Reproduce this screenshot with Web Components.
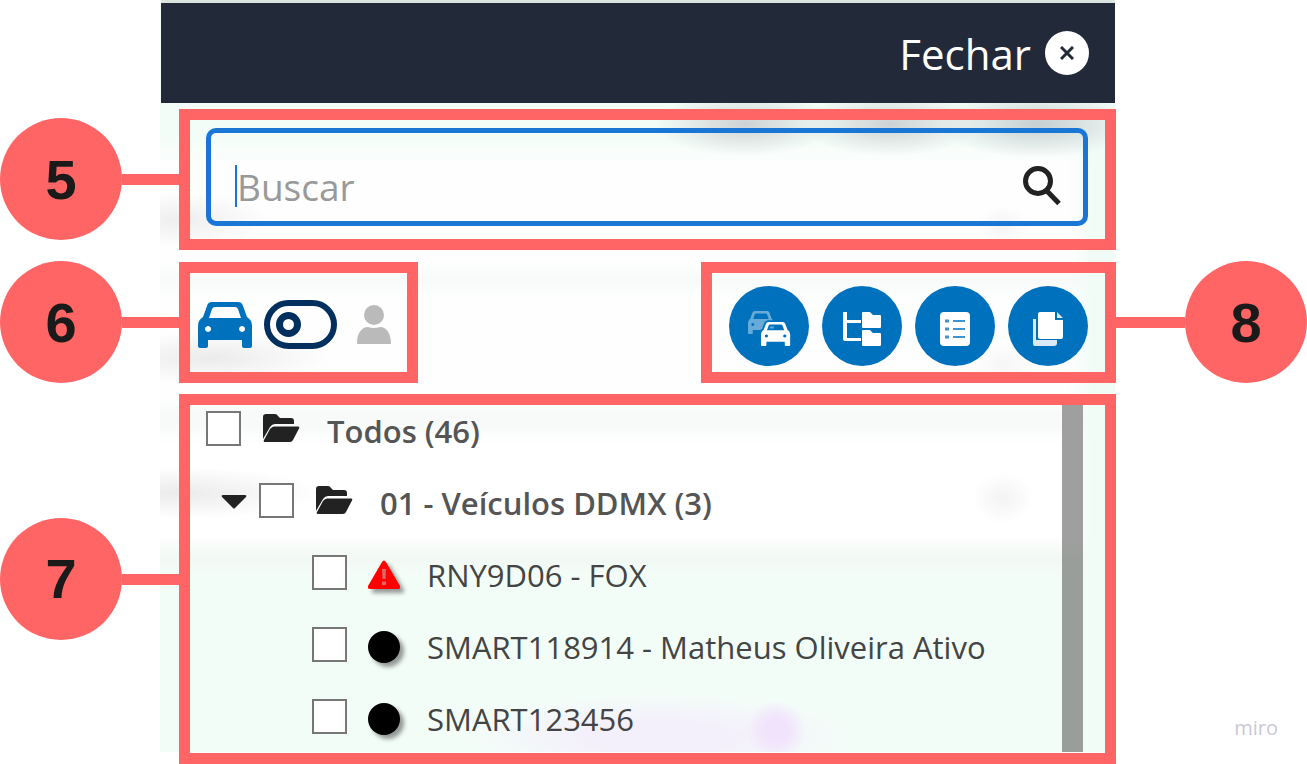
<!DOCTYPE html>
<html lang="pt-BR">
<head>
<meta charset="utf-8">
<meta name="viewport" content="width=device-width, initial-scale=1">
<title>Painel de veículos</title>
<style>
  body {
    margin: 0;
    background: #fff;
    font-family: "Open Sans", "Noto Sans", sans-serif;
  }
</style>
</head>
<body>
<guide-board>
  <panel-header>Fechar</panel-header>
  <callout-frame class="wide" number="5">
    <search-field placeholder="Buscar"></search-field>
  </callout-frame>
  <board-row>
    <callout-frame number="6">
      <mode-switch></mode-switch>
    </callout-frame>
    <callout-frame number="8" side="right">
      <action-bar>
        <round-action icon="cars" label="Veículos"></round-action>
        <round-action icon="tree" label="Grupos"></round-action>
        <round-action icon="list" label="Lista"></round-action>
        <round-action icon="copy" label="Copiar"></round-action>
      </action-bar>
    </callout-frame>
  </board-row>
  <callout-frame class="wide" number="7">
    <vehicle-tree>
      <tree-item level="0" icon="folder">Todos (46)</tree-item>
      <tree-item level="1" icon="folder" open>01 - Veículos DDMX (3)</tree-item>
      <tree-item level="2" icon="alert">RNY9D06 - FOX</tree-item>
      <tree-item level="2" icon="dot">SMART118914 - Matheus Oliveira Ativo</tree-item>
      <tree-item level="2" icon="dot">SMART123456</tree-item>
    </vehicle-tree>
  </callout-frame>
</guide-board>

<script>
const CAR = 'M14 0H40q4 0 5 4l4 11q5 3 5 9V44q0 2-2 2H46q-2 0-2-2V38H10v6q0 2-2 2H2q-2 0-2-2V24q0-6 5-9L9 4q1-4 5-4zM17 5q-2 0-3 2L11 16H43L40 7q-1-2-3-2zM10 24a3 3 0 1 0 .1 0zM44 24a3 3 0 1 0 .1 0z';

const ICONS = {
  car: `<svg width="54" height="46" viewBox="0 0 54 46" fill="#0071bd" fill-rule="evenodd"><path d="${CAR}"/></svg>`,
  person: `<svg width="34" height="40" viewBox="0 0 34 40" fill="#bababa"><circle cx="17" cy="10" r="10"/><path d="M0 38C0 28 5 22 11 22q6 2 12 0c6 0 11 6 11 16q0 1-1 1H1q-1 0-1-1z"/></svg>`,
  search: `<svg width="38" height="40" viewBox="0 0 38 40" fill="none" stroke="#222" stroke-width="5"><circle cx="15" cy="15" r="12.500"/><path d="M24 25L36 37.500"/></svg>`,
  close: `<svg width="14" height="14" viewBox="0 0 14 14" stroke="#222938" stroke-width="3"><path d="M1 1l12 12M13 1L1 13"/></svg>`,
  caret: `<svg width="26" height="14" viewBox="0 0 26 14" fill="#222"><path d="M2 0H24q2 0 1 2L14 13q-1 1-2 0L1 2Q0 0 2 0z"/></svg>`,
  folder: `<svg width="38" height="30" viewBox="0 0 38 30" fill="#222"><path d="M1 4q0-3 3-3h9q2 0 3 2l2 2h11q3 0 3 3v3H13q-3 0-5 3L1 26z"/><path d="M12 13.500h24q2 0 1 2L31 27q-1 2-3 2H3q-2 0-1-2L8 16q2-2.500 4-2.500z"/></svg>`,
  alert: `<svg width="32" height="32" viewBox="0 0 32 32"><path d="M14 3q2-3 4 0l14 24q1 3-2 3H2q-3 0-2-3z" fill="#f00"/><path d="M14 10h4l-.5 10h-3zM14 22.500h4v3.500h-4z" fill="#d8686a"/></svg>`,
  dot: `<svg width="32" height="32" viewBox="0 0 32 32"><circle cx="16" cy="16" r="16"/></svg>`,
  cars: `<svg width="44" height="36" viewBox="0 0 44 36" fill-rule="evenodd"><path transform="translate(1) scale(.48 .5)" d="${CAR}" fill="#69abd8"/><path transform="translate(14 11) scale(.54 .52)" d="${CAR}" fill="none" stroke="#0071bd" stroke-width="7"/><path transform="translate(14 11) scale(.54 .52)" d="${CAR}" fill="#fff"/></svg>`,
  tree: `<svg width="40" height="36" viewBox="0 0 40 36" fill="#fff"><path d="M1 1h4v8h14v3H5v15h14v3H3q-2 0-2-2zM20 2q0-1 1-1h7l3 3h7q1 0 1 1v11q0 1-1 1H21q-1 0-1-1zM20 20q0-1 1-1h7l3 3h7q1 0 1 1v11q0 1-1 1H21q-1 0-1-1z"/></svg>`,
  list: `<svg width="32" height="36" viewBox="0 0 32 36"><rect x="1" y="1" width="30" height="34" rx="4" fill="#fff"/><g stroke="#3f94cf" stroke-width="2"><path d="M14 10h12M14 18h12M14 26h12"/><path d="M6 10h4M6 18h4M6 26h4" stroke-width="3"/></g></svg>`,
  copy: `<svg width="34" height="36" viewBox="0 0 34 36"><path d="M2 8h3v21h21v3q0 3-3 3H4q-2 0-2-2z" fill="#dbe9f6"/><path d="M9 1h15v8h8v17q0 2-2 2H9q-2 0-2-2V3q0-2 2-2z" fill="#fff"/><path d="M26 1l6 6h-6z" fill="#dbe9f6"/></svg>`
};

function render(element, markup) {
  const template = document.createElement('template');
  template.innerHTML = markup;
  element.attachShadow({mode: 'open'}).appendChild(template.content.cloneNode(true));
}

/**
 * GuideBoard: the panel backdrop with the annotated sections over it
 */
customElements.define('guide-board', class GuideBoard extends HTMLElement {
constructor() {
  super();
  render(this, `
<style>
  :host {
    display: grid;
  }
  .backdrop, .sections, a {
    grid-area: 1 / 1;
  }
  .backdrop {
    margin: 0 192px 12px 160px;
    background:
      radial-gradient(30px 30px at 616px 730px, #f1e3fc 40%, transparent),
      radial-gradient(190px 44px at 500px 738px, #f4f0fb 40%, transparent),
      radial-gradient(90px 32px at 585px 124px, #cdd3d4, transparent),
      radial-gradient(90px 32px at 730px 124px, #cdd3d4, transparent),
      radial-gradient(100px 34px at 878px 124px, #c6cfd1, transparent),
      radial-gradient(90px 28px at 20px 220px, #eee, transparent),
      radial-gradient(120px 26px at 50px 358px, #ebebeb, transparent),
      radial-gradient(140px 26px at 20px 493px, #ebebeb, transparent),
      radial-gradient(26px 20px at 843px 226px, #f4f4f4, transparent),
      radial-gradient(30px 22px at 843px 365px, #f6f6f6, transparent),
      radial-gradient(30px 26px at 843px 498px, #f3f3f3, transparent),
      linear-gradient(to left, #f2fcf7 24px, transparent 48px),
      linear-gradient(#f2fdf7 136px, #fefefe 164px, #fefefe 260px, #f8fafa 280px,
        #fefefe 300px, #fefefe 400px, #f8fafa 412px, #f8fafa 426px, #fff 444px,
        #fff 535px, #f2f8f4 558px, #f3fdf8 576px);
  }
  .sections {
    display: flex;
    flex-direction: column;
  }
  ::slotted(panel-header) {
    margin: 0 192px 6px 161px;
  }
  ::slotted(board-row) {
    margin: 12px 0 11px;
  }
  ::slotted(.wide) {
    margin-right: 191px;
  }
  a {
    place-self: end;
    margin: 0 29px 24px 0;
    color: #cac8d6;
    font-size: 20px;
    line-height: 24px;
    text-decoration: none;
  }
</style>
<div class="backdrop"></div>
<div class="sections"><slot></slot></div>
<a href="#miro">miro</a>
`);
}
});

/**
 * BoardRow
 */
customElements.define('board-row', class BoardRow extends HTMLElement {
constructor() {
  super();
  render(this, `
<style>
  :host {
    display: flex;
    justify-content: space-between;
  }
</style>
<slot></slot>
`);
}
});

/**
 * CalloutFrame: numbered marker, connector line and outlined area
 */
customElements.define('callout-frame', class CalloutFrame extends HTMLElement {
constructor() {
  super();
  render(this, `
<style>
  :host {
    --callout-color: #ff6565;
    display: flex;
    align-items: center;
  }
  .marker {
    flex: none;
    display: grid;
    place-items: center;
    width: 122px;
    height: 122px;
    margin: -1px 0 0;
    border-radius: 50%;
    background: var(--callout-color);
    color: #1a1a1a;
    font: bold 56px "Liberation Sans", sans-serif;
  }
  .line {
    flex: none;
    width: 57px;
    height: 11px;
    background: var(--callout-color);
  }
  .frame {
    flex: 1;
    border: 11px solid var(--callout-color);
  }
  :host([side="right"]) {
    flex-direction: row-reverse;
  }
  :host([side="right"]) .line {
    width: 69px;
  }
</style>
<div class="marker">${this.getAttribute('number')}</div>
<div class="line"></div>
<div class="frame"><slot></slot></div>
`);
}
});

/**
 * PanelHeader
 */
customElements.define('panel-header', class PanelHeader extends HTMLElement {
constructor() {
  super();
  render(this, `
<style>
  :host {
    display: flex;
    justify-content: flex-end;
    border-top: 3px solid #dce4df;
    background: #222938;
  }
  button {
    display: flex;
    align-items: center;
    gap: 14px;
    height: 100px;
    padding: 0 26px;
    border: 0;
    background: none;
    color: #fff;
    font: 42px "Open Sans", sans-serif;
  }
  .badge {
    display: grid;
    place-items: center;
    width: 44px;
    height: 44px;
    border-radius: 50%;
    background: #fff;
  }
</style>
<button type="button"><slot></slot><span class="badge">${ICONS.close}</span></button>
`);
}
});

/**
 * SearchField
 */
customElements.define('search-field', class SearchField extends HTMLElement {
constructor() {
  super();
  const placeholder = this.getAttribute('placeholder');
  render(this, `
<style>
  :host {
    display: block;
    padding: 8px 17px 13px 16px;
  }
  .box {
    display: flex;
    align-items: center;
    box-sizing: border-box;
    height: 98px;
    padding: 18px 22px 0 24px;
    border: 5px solid #1976d5;
    border-radius: 10px;
  }
  .caret {
    width: 2px;
    height: 42px;
    background: #1976d5;
  }
  input {
    flex: 1;
    min-width: 0;
    padding: 0;
    border: 0;
    outline: 0;
    background: none;
    color: #222;
    font: 37px "Open Sans", sans-serif;
  }
  input::placeholder {
    color: #999;
    opacity: 1;
  }
  svg {
    display: block;
  }
</style>
<div class="box">
  <span class="caret"></span>
  <input type="text" placeholder="${placeholder}" aria-label="${placeholder}">
  ${ICONS.search}
</div>
`);
}
});

/**
 * ModeSwitch: vehicles or people
 */
customElements.define('mode-switch', class ModeSwitch extends HTMLElement {
constructor() {
  super();
  render(this, `
<style>
  :host {
    display: flex;
    align-items: center;
    gap: 12px;
    height: 95px;
    padding: 4px 16px 0 8px;
  }
  input {
    appearance: none;
    display: flex;
    align-items: center;
    box-sizing: border-box;
    width: 73px;
    height: 49px;
    margin: 0;
    padding-left: 6px;
    border: 6px solid #01305f;
    border-radius: 25px;
  }
  input::before {
    content: "";
    box-sizing: border-box;
    width: 25px;
    height: 25px;
    border: 7px solid #01305f;
    border-radius: 50%;
  }
  input:checked {
    justify-content: flex-end;
    padding: 0 6px 0 0;
  }
  svg {
    display: block;
  }
  input + svg {
    margin-left: 8px;
  }
</style>
${ICONS.car}
<input type="checkbox" role="switch" aria-label="Pessoas">
${ICONS.person}
`);
}
});

/**
 * ActionBar
 */
customElements.define('action-bar', class ActionBar extends HTMLElement {
constructor() {
  super();
  render(this, `
<style>
  :host {
    display: flex;
    gap: 13px;
    padding: 13px 17px 6px;
  }
</style>
<slot></slot>
`);
}
});

/**
 * RoundAction
 */
customElements.define('round-action', class RoundAction extends HTMLElement {
constructor() {
  super();
  render(this, `
<style>
  :host {
    display: block;
  }
  button {
    display: grid;
    place-items: center;
    width: 80px;
    height: 80px;
    padding: 6px 0 0;
    border: 0;
    border-radius: 50%;
    background: #0071bd;
  }
  svg {
    display: block;
  }
</style>
<button type="button" aria-label="${this.getAttribute('label')}">${ICONS[this.getAttribute('icon')]}</button>
`);
}
});

/**
 * VehicleTree
 */
customElements.define('vehicle-tree', class VehicleTree extends HTMLElement {
constructor() {
  super();
  render(this, `
<style>
  :host {
    display: flex;
    padding: 0 22px 0 16px;
  }
  .items {
    flex: 1;
    display: flex;
    flex-direction: column;
    gap: 36px;
    padding: 5px 0 19px;
  }
  .scrollbar {
    width: 21px;
    margin-bottom: 1px;
    background: linear-gradient(#9f9f9f 130px, #999e9a 160px);
  }
</style>
<div class="items"><slot></slot></div>
<div class="scrollbar"></div>
`);
}
});

/**
 * TreeItem
 */
customElements.define('tree-item', class TreeItem extends HTMLElement {
constructor() {
  super();
  const icon = this.getAttribute('icon');
  const arrow = this.hasAttribute('open')
    ? `<button type="button" aria-label="Recolher">${ICONS.caret}</button>`
    : '';
  render(this, `
<style>
  :host {
    display: block;
    color: #444;
    font-size: 31px;
    line-height: 36px;
  }
  :host([icon="folder"]) {
    color: #555;
    font-weight: 600;
  }
  .row {
    display: flex;
    align-items: center;
    height: 36px;
  }
  .indent {
    display: flex;
    justify-content: flex-end;
    width: 0;
  }
  :host([level="1"]) .indent {
    width: 53px;
  }
  :host([level="2"]) .indent {
    width: 106px;
  }
  button {
    display: block;
    margin-right: 12px;
    padding: 4px 0 0;
    border: 0;
    background: none;
  }
  input {
    appearance: none;
    flex: none;
    box-sizing: border-box;
    width: 35px;
    height: 35px;
    margin: 0;
    border: 2px solid #777;
    background: #fff;
  }
  label {
    display: flex;
    align-items: center;
    gap: 27px;
    padding-left: 21px;
    white-space: nowrap;
  }
  span {
    padding-top: 6px;
  }
  svg {
    display: block;
  }
  .alert, .dot {
    padding-top: 6px;
    filter: drop-shadow(4px 4px 2px rgba(0, 0, 0, 0.4));
  }
</style>
<div class="row">
  <div class="indent">${arrow}</div>
  <input type="checkbox" id="check">
  <label for="check"><div class="${icon}">${ICONS[icon]}</div><span><slot></slot></span></label>
</div>
`);
}
});
</script>
</body>
</html>
